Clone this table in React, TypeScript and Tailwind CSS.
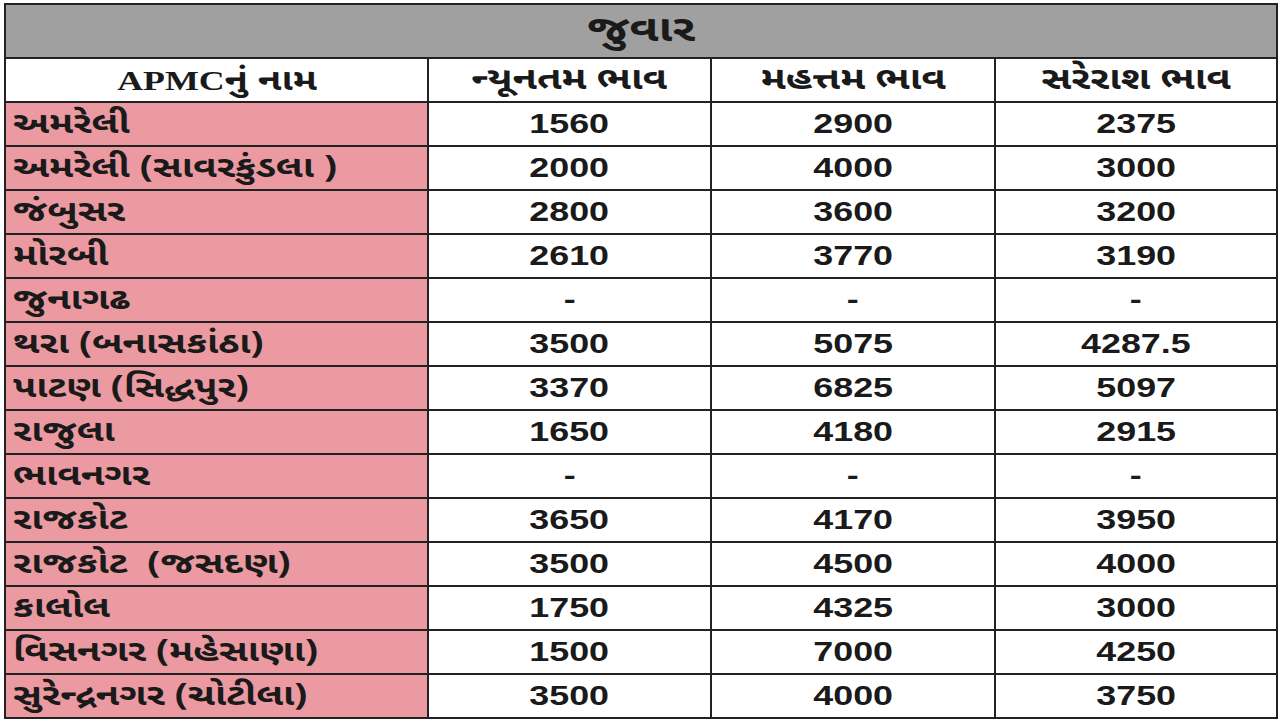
const rows: [string, string, string, string][] = [
  ['અમરેલી', '1560', '2900', '2375'],
  ['અમરેલી (સાવરકુંડલા )', '2000', '4000', '3000'],
  ['જંબુસર', '2800', '3600', '3200'],
  ['મોરબી', '2610', '3770', '3190'],
  ['જુનાગઢ', '-', '-', '-'],
  ['થરા (બનાસકાંઠા)', '3500', '5075', '4287.5'],
  ['પાટણ (સિદ્ધપુર)', '3370', '6825', '5097'],
  ['રાજુલા', '1650', '4180', '2915'],
  ['ભાવનગર', '-', '-', '-'],
  ['રાજકોટ', '3650', '4170', '3950'],
  ['રાજકોટ  (જસદણ)', '3500', '4500', '4000'],
  ['કાલોલ', '1750', '4325', '3000'],
  ['વિસનગર (મહેસાણા)', '1500', '7000', '4250'],
  ['સુરેન્દ્રનગર (ચોટીલા)', '3500', '4000', '3750'],
]

const guj = "font-['Noto_Sans_Gujarati','Lohit_Gujarati','Noto_Sans',sans-serif]"
// the source picture is stretched sideways, so the text is too
const wide = 'inline-block scale-x-[1.28]'

export default function App() {
  return (
    <div className="w-[1280px] h-[720px] bg-white pt-[3px] pl-[4px] overflow-hidden">
      <table className="border-collapse w-[1272px] table-fixed text-[#1a1a1a]">
        <colgroup>
          <col className="w-[423px]" />
          <col className="w-[283px]" />
          <col className="w-[284px]" />
          <col className="w-[282px]" />
        </colgroup>
        <thead>
          <tr className="h-[54px] bg-[#a0a0a0]">
            <th colSpan={4} className={`border-2 border-[#222] pt-[3px] text-[37px] font-bold leading-none ${guj}`}>
              <span className={wide}>જુવાર</span>
            </th>
          </tr>
          <tr className="h-[44px] bg-white">
            <th className="border-2 border-[#222] pt-[2px] text-[30px] font-bold leading-none">
              <span className={wide}>
                <span className="font-['Liberation_Serif',serif] text-[28px]">APMC</span>
                <span className={guj}>નું નામ</span>
              </span>
            </th>
            <th className={`border-2 border-[#222] pt-[2px] text-[31px] font-bold leading-none ${guj}`}>
              <span className={wide}>ન્યૂનતમ ભાવ</span>
            </th>
            <th className={`border-2 border-[#222] pt-[2px] text-[31px] font-bold leading-none ${guj}`}>
              <span className={wide}>મહત્તમ ભાવ</span>
            </th>
            <th className={`border-2 border-[#222] pt-[2px] text-[31px] font-bold leading-none ${guj}`}>
              <span className={wide}>સરેરાશ ભાવ</span>
            </th>
          </tr>
        </thead>
        <tbody>
          {rows.map(([name, min, max, avg]) => (
            <tr key={name} className="h-[44px]">
              <td className={`border-2 border-[#222] bg-[#eb9aa2] px-[7px] pt-[4px] text-[30px] font-bold leading-none whitespace-pre ${guj}`}>
                <span className={`${wide} origin-left`}>{name}</span>
              </td>
              {[min, max, avg].map((v, i) => (
                <td
                  key={i}
                  className="border-2 border-[#222] bg-white text-center text-[28px] font-bold leading-none font-['Liberation_Sans',Arial,sans-serif]"
                >
                  <span className={wide}>{v}</span>
                </td>
              ))}
            </tr>
          ))}
        </tbody>
      </table>
    </div>
  )
}
